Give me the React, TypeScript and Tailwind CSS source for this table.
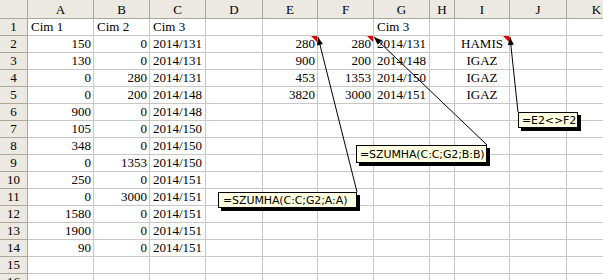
import React from "react";

const COLS = [
  { key: "A", w: "w-[66px]" },
  { key: "B", w: "w-[56px]" },
  { key: "C", w: "w-[56px]" },
  { key: "D", w: "w-[57px]" },
  { key: "E", w: "w-[55px]" },
  { key: "F", w: "w-[56px]" },
  { key: "G", w: "w-[56px]" },
  { key: "H", w: "w-[25px]" },
  { key: "I", w: "w-[55px]" },
  { key: "J", w: "w-[57px]" },
  { key: "K", w: "w-[60px]" },
];

const ROWS: string[][] = [
  ["Cim 1", "Cim 2", "Cim 3", "", "", "", "Cim 3", "", "", "", ""],
  ["150", "0", "2014/131", "", "280", "280", "2014/131", "", "HAMIS", "", ""],
  ["130", "0", "2014/131", "", "900", "200", "2014/148", "", "IGAZ", "", ""],
  ["0", "280", "2014/131", "", "453", "1353", "2014/150", "", "IGAZ", "", ""],
  ["0", "200", "2014/148", "", "3820", "3000", "2014/151", "", "IGAZ", "", ""],
  ["900", "0", "2014/148", "", "", "", "", "", "", "", ""],
  ["105", "0", "2014/150", "", "", "", "", "", "", "", ""],
  ["348", "0", "2014/150", "", "", "", "", "", "", "", ""],
  ["0", "1353", "2014/150", "", "", "", "", "", "", "", ""],
  ["250", "0", "2014/151", "", "", "", "", "", "", "", ""],
  ["0", "3000", "2014/151", "", "", "", "", "", "", "", ""],
  ["1580", "0", "2014/151", "", "", "", "", "", "", "", ""],
  ["1900", "0", "2014/151", "", "", "", "", "", "", "", ""],
  ["90", "0", "2014/151", "", "", "", "", "", "", "", ""],
  ["", "", "", "", "", "", "", "", "", "", ""],
  ["", "", "", "", "", "", "", "", "", "", ""],
];

// arrow tip polygon
function head(x1: number, y1: number, x2: number, y2: number, len = 8, half = 3) {
  const dx = x2 - x1;
  const dy = y2 - y1;
  const d = Math.hypot(dx, dy);
  const ux = dx / d;
  const uy = dy / d;
  const bx = x2 - ux * len;
  const by = y2 - uy * len;
  return `${x2},${y2} ${bx - uy * half},${by + ux * half} ${bx + uy * half},${by - ux * half}`;
}

const ARROWS = [
  { x1: 357, y1: 192, x2: 318, y2: 37 },
  { x1: 487, y1: 145, x2: 374, y2: 37 },
  { x1: 518, y1: 112, x2: 510, y2: 37 },
];

function cellAlign(col: string, v: string) {
  if (col === "I") return "justify-center";
  if (/^\d+$/.test(v)) return "justify-end pr-[2px]";
  return "justify-start pl-[3px]";
}

export default function App() {
  return (
    <div className="relative w-[603px] h-[280px] overflow-hidden bg-white font-['Liberation_Serif',serif] text-[13px] text-black">
      {/* column header */}
      <div className="flex h-[19px]">
        <div className="w-[28px] shrink-0 bg-[#ebe9e1] border-r border-b border-[#aca899]" />
        {COLS.map((c) => (
          <div
            key={c.key}
            className={`${c.w} shrink-0 bg-[#ebe9e1] border-r border-b border-[#aca899] flex items-center justify-center leading-[18px] pt-[1px]`}
          >
            {c.key}
          </div>
        ))}
      </div>

      {ROWS.map((row, r) => (
        <div key={r} className="flex h-[17px]">
          <div className="w-[28px] shrink-0 bg-[#ebe9e1] border-r border-b border-[#aca899] flex items-center justify-center leading-[16px]">
            {r + 1}
          </div>
          {COLS.map((c, i) => (
            <div
              key={c.key}
              className={`${c.w} shrink-0 border-r border-b border-[#c8c8c8] flex items-center leading-[16px] whitespace-nowrap ${cellAlign(c.key, row[i])}`}
            >
              {row[i]}
            </div>
          ))}
        </div>
      ))}

      {/* comment indicators + arrows */}
      <svg className="absolute left-0 top-0 pointer-events-none" width="603" height="280">
        <polygon points="311,36 317,36 317,42" fill="#e00000" />
        <polygon points="367,36 373,36 373,42" fill="#e00000" />
        <polygon points="503,36 509,36 509,42" fill="#e00000" />
        {ARROWS.map((a, i) => (
          <g key={i}>
            <line x1={a.x1} y1={a.y1} x2={a.x2} y2={a.y2} stroke="#000" strokeWidth="1" />
            <polygon points={head(a.x1, a.y1, a.x2, a.y2)} fill="#000" />
          </g>
        ))}
      </svg>

      {/* comment boxes */}
      <div className="absolute left-[218px] top-[192px] w-[139px] h-[16px] bg-[#ffffe1] border border-black shadow-[3px_3px_0_0_#000] flex items-center pl-[4px] font-['DejaVu_Sans',sans-serif] text-[11px] leading-none tracking-[-0.1px]">
        =SZUMHA(C:C;G2;A:A)
      </div>
      <div className="absolute left-[356px] top-[145px] w-[131px] h-[18px] bg-[#ffffe1] border border-black shadow-[3px_3px_0_0_#000] flex items-center pl-[3px] font-['DejaVu_Sans',sans-serif] text-[11px] leading-none tracking-[-0.1px]">
        =SZUMHA(C:C;G2;B:B)
      </div>
      <div className="absolute left-[518px] top-[112px] w-[60px] h-[16px] bg-[#ffffe1] border border-black shadow-[3px_3px_0_0_#000] flex items-center pl-[3px] font-['DejaVu_Sans',sans-serif] text-[11px] leading-none tracking-[-0.1px]">
        =E2&lt;&gt;F2
      </div>
    </div>
  );
}
